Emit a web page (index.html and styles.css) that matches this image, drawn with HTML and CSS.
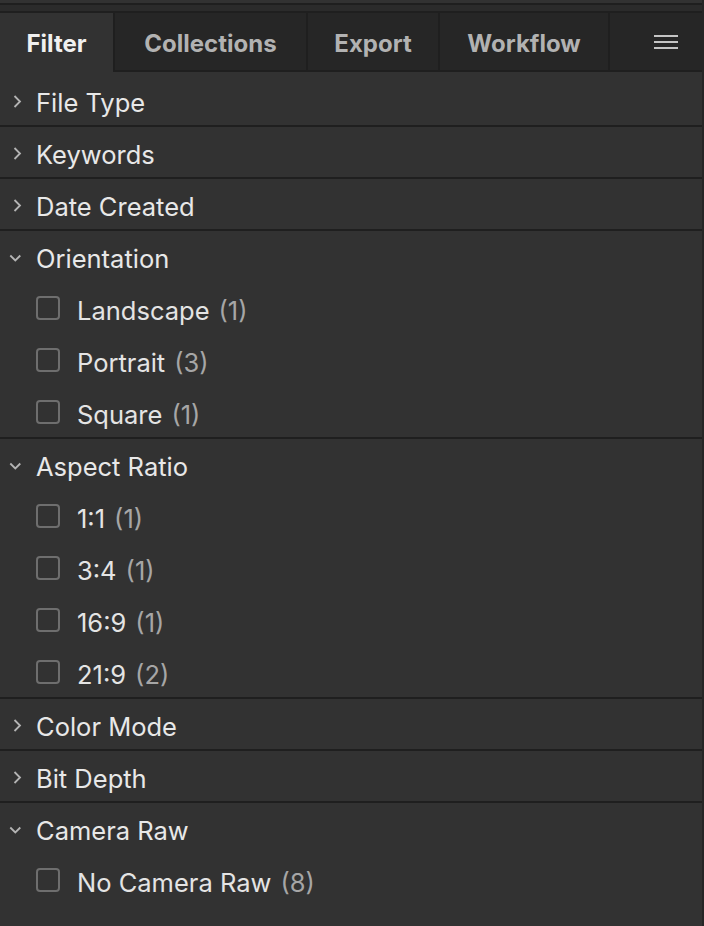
FILE: index.html
```html
<!DOCTYPE html>
<html lang="en">
<head>
    <meta charset="UTF-8">
    <meta name="viewport" content="width=device-width, initial-scale=1.0">
    <title>Filter Panel</title>
    <link rel="stylesheet" href="styles.css">
</head>
<body>
    <div class="panel">
        <div class="top-strip"></div>
        <div class="tabs">
            <div class="tab active">Filter</div>
            <div class="tab tab-collections">Collections</div>
            <div class="tab tab-export">Export</div>
            <div class="tab tab-workflow">Workflow</div>
            <div class="tab tab-menu">
                <svg width="24" height="14" viewBox="0 0 24 14">
                    <rect x="0" y="0" width="24" height="2" fill="#c4c4c4"/>
                    <rect x="0" y="6" width="24" height="2" fill="#c4c4c4"/>
                    <rect x="0" y="12" width="24" height="2" fill="#c4c4c4"/>
                </svg>
            </div>
        </div>

        <div class="sections">
            <!-- collapsed -->
            <div class="section">
                <div class="section-head">
                    <svg class="chev" viewBox="0 0 24 24"><path d="M10.5 8 L16 13.5 L10.5 19"/></svg>
                    <span>File Type</span>
                </div>
            </div>
            <div class="section">
                <div class="section-head">
                    <svg class="chev" viewBox="0 0 24 24"><path d="M10.5 8 L16 13.5 L10.5 19"/></svg>
                    <span>Keywords</span>
                </div>
            </div>
            <div class="section">
                <div class="section-head">
                    <svg class="chev" viewBox="0 0 24 24"><path d="M10.5 8 L16 13.5 L10.5 19"/></svg>
                    <span>Date Created</span>
                </div>
            </div>

            <!-- expanded -->
            <div class="section">
                <div class="section-head">
                    <svg class="chev" viewBox="0 0 24 24"><path d="M6.3 11.5 L11.3 16.5 L16.3 11.5"/></svg>
                    <span>Orientation</span>
                </div>
                <label class="item"><span class="box"></span><span class="name">Landscape</span><span class="count">(1)</span></label>
                <label class="item"><span class="box"></span><span class="name">Portrait</span><span class="count">(3)</span></label>
                <label class="item"><span class="box"></span><span class="name">Square</span><span class="count">(1)</span></label>
            </div>
            <div class="section">
                <div class="section-head">
                    <svg class="chev" viewBox="0 0 24 24"><path d="M6.3 11.5 L11.3 16.5 L16.3 11.5"/></svg>
                    <span>Aspect Ratio</span>
                </div>
                <label class="item"><span class="box"></span><span class="name">1:1</span><span class="count">(1)</span></label>
                <label class="item"><span class="box"></span><span class="name">3:4</span><span class="count">(1)</span></label>
                <label class="item"><span class="box"></span><span class="name">16:9</span><span class="count">(1)</span></label>
                <label class="item"><span class="box"></span><span class="name">21:9</span><span class="count">(2)</span></label>
            </div>

            <div class="section">
                <div class="section-head">
                    <svg class="chev" viewBox="0 0 24 24"><path d="M10.5 8 L16 13.5 L10.5 19"/></svg>
                    <span>Color Mode</span>
                </div>
            </div>
            <div class="section">
                <div class="section-head">
                    <svg class="chev" viewBox="0 0 24 24"><path d="M10.5 8 L16 13.5 L10.5 19"/></svg>
                    <span>Bit Depth</span>
                </div>
            </div>
            <div class="section last">
                <div class="section-head">
                    <svg class="chev" viewBox="0 0 24 24"><path d="M6.3 11.5 L11.3 16.5 L16.3 11.5"/></svg>
                    <span>Camera Raw</span>
                </div>
                <label class="item"><span class="box"></span><span class="name">No Camera Raw</span><span class="count">(8)</span></label>
            </div>
        </div>
    </div>
</body>
</html>
```

FILE: styles.css
```css
body {
    margin: 0;
    padding: 0;
    background-color: #323232;
    font-family: Inter, "Liberation Sans", Arial, sans-serif;
    -webkit-font-smoothing: antialiased;
}
.panel {
    width: 702px;
    height: 926px;
    background: #323232;
    border-right: 2px solid #262626;
    overflow: hidden;
}
.top-strip {
    height: 6px;
    margin-top: 3px;
    background: #2b2b2b;
    border-top: 2px solid #1f1f1f;
    border-bottom: 2px solid #1f1f1f;
}
.tabs {
    display: flex;
    height: 59px;
}
.tab {
    display: flex;
    align-items: center;
    justify-content: center;
    background: #262626;
    border-left: 2px solid #1f1f1f;
    border-bottom: 2px solid #1f1f1f;
    color: #b2b2b2;
    font-size: 24px;
    font-weight: 700;
    padding-top: 4px;
}
.tab.active {
    width: 113px;
    background: #323232;
    color: #f0f0f0;
    border-left: none;
    border-bottom-color: #323232;
}
.tab-collections { width: 191px; }
.tab-export { width: 130px; }
.tab-workflow { width: 168px; }
.tab-menu {
    flex: 1;
    justify-content: flex-end;
    padding-right: 24px;
    padding-top: 0;
}
.sections {
    padding-top: 3px;
}
.section {
    border-bottom: 2px solid #1f1f1f;
}
.section.last {
    border-bottom: none;
}
.section-head {
    box-sizing: border-box;
    display: flex;
    align-items: center;
    height: 50px;
    padding-top: 5px;
    color: #e8e8e8;
    font-size: 25.5px;
}
.chev {
    width: 24px;
    height: 24px;
    margin: -5px 8px 0 4px;
    fill: none;
    stroke: #b4b4b4;
    stroke-width: 1.8;
}
.item {
    box-sizing: border-box;
    display: flex;
    align-items: center;
    height: 52px;
    padding-left: 36px;
    padding-top: 6px;
    font-size: 25.5px;
    color: #e4e4e4;
}
.box {
    box-sizing: border-box;
    width: 24px;
    height: 24px;
    border: 2px solid #6e6e6e;
    border-radius: 4px;
    margin-right: 17px;
    margin-top: -5px;
}
.count {
    color: #a6a6a6;
    margin-left: 9px;
}
```
